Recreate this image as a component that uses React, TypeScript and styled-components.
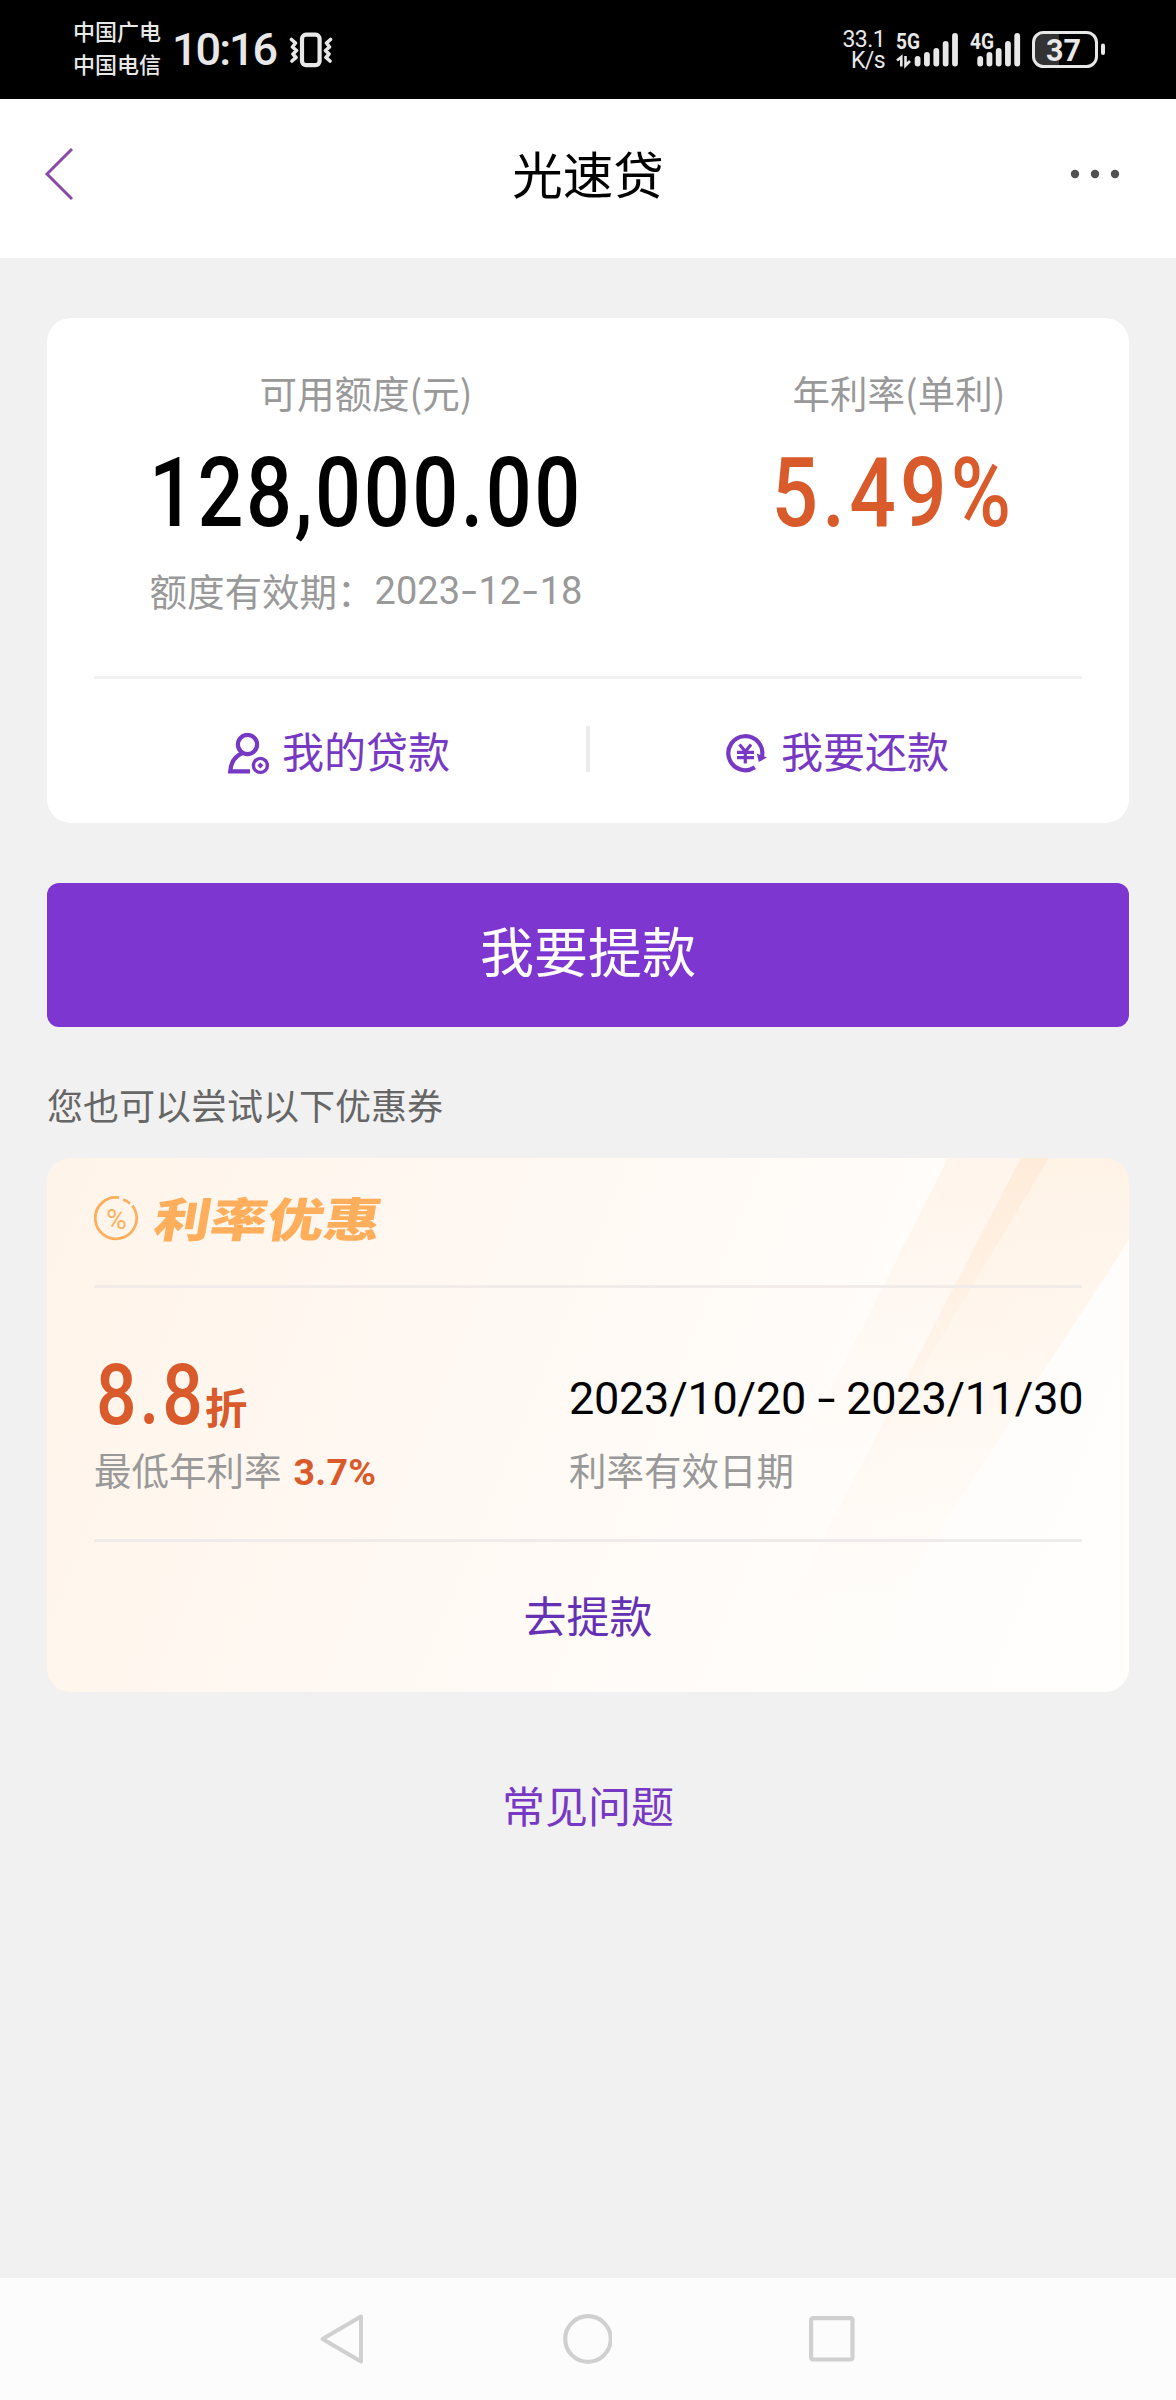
import React from 'react';
import styled, { createGlobalStyle } from 'styled-components';

const cjk = `"Noto Sans CJK SC", sans-serif`;
const latin = `Roboto, "Noto Sans CJK SC", sans-serif`;
const purple = '#7738c4';
const orange = '#d95a2b';

const GlobalStyle = createGlobalStyle`
  * { box-sizing: border-box; }
  body { margin: 0; background: #f1f1f1; }
  button { border: 0; padding: 0; background: none; font-family: inherit; }
`;

const Screen = styled.div`
  display: flex;
  flex-direction: column;
  width: 1176px;
  height: 2400px;
  background: #f1f1f1;
  font-family: ${cjk};
  white-space: nowrap;
`;

/* Status bar */

const StatusBar = styled.div`
  display: flex;
  justify-content: space-between;
  height: 99px;
  padding: 0 70px 0 72px;
  background: #000;
  color: #e8e8e8;
`;

const StatusGroup = styled.div`
  display: flex;
  align-items: flex-start;
`;

const Carriers = styled.div`
  display: flex;
  flex-direction: column;
  width: 100px;
  padding: 14px 0 0 1px;
  font-size: 22px;
  font-weight: 500;
  line-height: 33px;
`;

const Clock = styled.div`
  width: 117px;
  padding-top: 24px;
  font: 500 45px/52px ${latin};
  letter-spacing: -2px;
`;

const Speed = styled.div`
  display: flex;
  flex-direction: column;
  align-items: flex-end;
  width: 44px;
  margin-right: 11px;
  padding-top: 29px;
  font: 400 23px/21px ${latin};
  letter-spacing: -0.6px;
`;

const StatusIcon = styled.svg`
  display: block;
  flex: none;
`;

/* Title bar */

const TitleBar = styled.header`
  display: grid;
  grid-template-columns: 1fr auto 1fr;
  align-items: center;
  height: 159px;
  padding: 0 56px 9px 43px;
  background: #fff;
`;

const Title = styled.h1`
  margin: 0;
  padding-left: 13px;
  font-size: 50.5px;
  font-weight: 400;
  line-height: 72px;
  color: #000;
  transform: translateY(-2px);
`;

const MoreSlot = styled.div`
  display: flex;
  justify-content: flex-end;
`;

/* Content */

const Content = styled.main`
  display: flex;
  flex: 1;
  flex-direction: column;
  padding: 60px 47px 0;
`;

const LimitCard = styled.section`
  height: 505px;
  padding: 0 47px;
  border-radius: 24px;
  background: #fff;
`;

const Figures = styled.div`
  display: grid;
  grid-template-columns: 544px 1fr;
  height: 358px;
  padding-top: 48px;
`;

const Figure = styled.div<{ $shift?: number }>`
  display: flex;
  flex-direction: column;
  align-items: center;
  padding-left: ${(p) => p.$shift ?? 0}px;
`;

const Muted = styled.span`
  font-size: 37.5px;
  line-height: 52px;
  color: #999;
`;

const Amount = styled.span<{ $color: string; $spacing: number; $stretch: number; $offset?: number }>`
  height: 132px;
  margin: 9px 0 5px ${(p) => p.$offset ?? 0}px;
  font: 500 97px/132px ${latin};
  letter-spacing: ${(p) => p.$spacing}px;
  color: ${(p) => p.$color};
  transform: scaleX(${(p) => p.$stretch});
`;

const Validity = styled.div`
  display: flex;
  align-items: center;
  font-size: 37.5px;
  line-height: 52px;
  color: #999;
`;

const Digits = styled.span`
  padding-top: 3px;
  font: 400 38px/49px ${latin};
`;

const Hyphen = styled.span`
  display: inline-block;
  width: 18.5px;
  text-align: center;
  transform: scaleX(1.45);
`;

const Rule = styled.div<{ $color?: string }>`
  height: 3px;
  background: ${(p) => p.$color ?? '#f2f2f2'};
`;

const Actions = styled.div`
  display: grid;
  grid-template-columns: 492px 4px 492px;
  align-items: center;
  height: 144px;
`;

const Action = styled.button<{ $start: number; $gap: number }>`
  display: flex;
  align-items: center;
  gap: ${(p) => p.$gap}px;
  padding: 5px 0 0 ${(p) => p.$start}px;
  font-size: 42px;
  line-height: 60px;
  color: ${purple};
`;

const ActionLabel = styled.span`
  margin-top: -7px;
`;

const Separator = styled.div`
  height: 46px;
  margin-top: -4px;
  background: #ebebeb;
`;

const Primary = styled.button`
  height: 144px;
  margin-top: 60px;
  padding-bottom: 11px;
  border-radius: 12px;
  background: #7e36d0;
  font-size: 54px;
  line-height: 78px;
  color: #fff;
`;

const Hint = styled.p`
  margin: 51px 0 27px;
  font-size: 36px;
  line-height: 53px;
  color: #666;
`;

const Coupon = styled.section`
  position: relative;
  height: 534px;
  padding: 0 47px;
  overflow: hidden;
  border-radius: 24px;
  background: linear-gradient(112deg, #fff4e9 0%, #fff8f2 35%, #fffcf9 68%, #fffefd 100%);
`;

const Rays = styled.svg`
  position: absolute;
  inset: 0;
`;

const CouponBody = styled.div`
  position: relative;
`;

const CouponHead = styled.div`
  display: flex;
  align-items: center;
  gap: 19px;
  height: 127px;
  padding-bottom: 5px;
`;

const CouponTitle = styled.h2`
  margin: 0;
  font-size: 45px;
  font-weight: 900;
  line-height: 60px;
  color: #ffae5c;
  transform-origin: left center;
  transform: translate(-3px, -2px) scale(1.26, 1.04) skewX(-8deg);
`;

const Terms = styled.div`
  display: grid;
  grid-template-columns: 475px 1fr;
  height: 251px;
  padding-top: 64px;
`;

const Term = styled.div`
  display: flex;
  flex-direction: column;
`;

const TermValue = styled.div<{ $lift?: number }>`
  display: flex;
  align-items: baseline;
  height: 91px;
  margin-top: ${(p) => -(p.$lift ?? 0)}px;
  margin-bottom: ${(p) => p.$lift ?? 0}px;
`;

const Discount = styled.span`
  width: 111px;
  font: 500 85px/94px ${latin};
  letter-spacing: 3.5px;
  color: ${orange};
  transform-origin: left center;
  transform: translateX(2px) scaleX(0.84);
`;

const DiscountUnit = styled.span`
  font-size: 42.5px;
  font-weight: 700;
  line-height: 94px;
  color: ${orange};
`;

const Period = styled.span`
  font: 400 45px/94px ${latin};
  letter-spacing: -0.25px;
  color: #000;
`;

const Best = styled.b`
  margin-left: 12px;
  font: 700 37.5px/52px ${latin};
  letter-spacing: 0.3px;
  color: ${orange};
`;

const CouponAction = styled.button`
  display: block;
  width: 100%;
  height: 150px;
  padding-bottom: 7px;
  font-size: 43px;
  line-height: 62px;
  color: #6531b4;
`;

const Faq = styled.a`
  margin-top: 80px;
  align-self: center;
  font-size: 43px;
  line-height: 64px;
  color: ${purple};
`;

const NavBar = styled.nav`
  display: flex;
  align-items: center;
  justify-content: space-between;
  height: 122px;
  padding: 0 321px 0 319px;
  background: #fcfcfc;
`;

const Vibrate = () => (
  <StatusIcon width="44" height="99" viewBox="289 0 44 99" fill="none" stroke="#e8e8e8">
    <rect x="302" y="34.7" width="17.6" height="30.4" rx="4" strokeWidth="4.2" />
    <path d="M291.5 39.5l4 3.5-3 4 4 3.5-3.500 3.500 3 3.500-4 3.500M330.500 39.500l-4 3.500 3 4-4 3.500 3.500 3.500-3 3.500 4 3.500" strokeWidth="3.600" strokeLinecap="round" strokeLinejoin="round" />
  </StatusIcon>
);

const barTops = [56, 52, 48, 41, 33];

const Signal = ({ kind, x, first, step, width, arrows }: { kind: string; x: number; first: number; step: number; width: number; arrows?: boolean }) => (
  <StatusIcon width={width} height="99" viewBox={`${x} 0 ${width} 99`} fill="#e8e8e8">
    <text x={x} y="49" fontFamily="Roboto, sans-serif" fontSize="22.500" fontWeight="700" textLength="24" lengthAdjust="spacingAndGlyphs">{kind}</text>
    {arrows && (
      <path d={`M${x + 1} 60.500l4.300-3.500v9.500M${x + 9.500} 56v9.500l4.500-4.500`} fill="none" stroke="#e8e8e8" strokeWidth="2.600" />
    )}
    {barTops.map((top, i) => (
      <rect key={top} x={first + i * step} y={top} width="5.800" height={66.500 - top} rx="2.900" />
    ))}
  </StatusIcon>
);

const Battery = () => (
  <StatusIcon width="75" height="99" viewBox="1031 0 75 99">
    <path d="M1059 34h-16q-8 0-8 8v15q0 8 8 8h16z" fill="#333" />
    <rect x="1033.500" y="32.500" width="63" height="34" rx="10" fill="none" stroke="#e8e8e8" strokeWidth="3" />
    <rect x="1101" y="43.500" width="4" height="11.500" rx="2" fill="#e8e8e8" />
    <text x="1063.500" y="61" textAnchor="middle" fontFamily="Roboto, sans-serif" fontSize="32" fontWeight="700" textLength="35" lengthAdjust="spacingAndGlyphs" fill="#e8e8e8">37</text>
  </StatusIcon>
);

const PersonIcon = () => (
  <svg width="42" height="42" viewBox="0 0 42 42" fill="none" stroke={purple} strokeWidth="4.200">
    <circle cx="19.500" cy="11.500" r="9.600" />
    <path d="M22 38.400H2.200C2.800 29 8 22.500 15.500 19.800" />
    <circle cx="32.400" cy="32.400" r="7" strokeWidth="3.400" />
    <path d="M32.400 29.400l3 3-3 3-3-3z" fill={purple} stroke="none" />
  </svg>
);

const RepayIcon = () => (
  <svg width="42" height="42" viewBox="0 0 42 42" fill="none" stroke={purple}>
    <path d="M28.800 34.300A17 17 0 1 1 36 23.500" strokeWidth="4.200" />
    <path d="M30.800 20.500L41 24.600 32.800 29z" fill={purple} stroke="none" />
    <path d="M13.500 11.500l5.800 7 5.800-7M11 19.300h17M11 24.700h17M19.300 18V30.500" strokeWidth="3.200" />
  </svg>
);

const RateIcon = () => (
  <svg width="45" height="46" viewBox="0 0 45 46" fill="none" stroke="#ffae5c">
    <path d="M25 1.700A20.700 20.700 0 1 0 40.500 13M29 3.500A20 20 0 0 1 36 7.500M38.500 9.500L40.500 13" strokeWidth="2.800" />
    <text x="22.500" y="32.500" textAnchor="middle" fontFamily="Roboto, sans-serif" fontSize="28" fill="#ffae5c" stroke="none">%</text>
  </svg>
);

export default function App() {
  return (
    <>
      <GlobalStyle />
      <Screen>
        <StatusBar>
          <StatusGroup>
            <Carriers>
              <span>中国广电</span>
              <span>中国电信</span>
            </Carriers>
            <Clock>10:16</Clock>
            <Vibrate />
          </StatusGroup>
          <StatusGroup>
            <Speed>
              <span>33.1</span>
              <span>K/s</span>
            </Speed>
            <Signal kind="5G" x={896} first={914.7} step={9.350} width={74} arrows />
            <Signal kind="4G" x={970} first={977.3} step={9.250} width={61} />
            <Battery />
          </StatusGroup>
        </StatusBar>

        <TitleBar>
          <svg width="34" height="52" viewBox="0 0 34 52" fill="none" stroke="#8a4aa8" strokeWidth="3">
            <path d="M29 1L4 26l25 25" />
          </svg>
          <Title>光速贷</Title>
          <MoreSlot>
            <svg width="50" height="10" viewBox="0 0 50 10" fill="#505050">
              <circle cx="5" cy="5" r="4.200" />
              <circle cx="25" cy="5" r="4.200" />
              <circle cx="45" cy="5" r="4.200" />
            </svg>
          </MoreSlot>
        </TitleBar>

        <Content>
          <LimitCard>
            <Figures>
              <Figure>
                <Muted>可用额度(元)</Muted>
                <Amount $color="#000" $spacing={3} $stretch={0.835}>128,000.00</Amount>
                <Validity>
                  <span>额度有效期：</span>
                  <Digits>2023<Hyphen>-</Hyphen>12<Hyphen>-</Hyphen>18</Digits>
                </Validity>
              </Figure>
              <Figure $shift={78}>
                <Muted>年利率(单利)</Muted>
                <Amount $color={orange} $spacing={5} $stretch={0.845} $offset={-11}>5.49%</Amount>
              </Figure>
            </Figures>
            <Rule />
            <Actions>
              <Action $start={134} $gap={12}>
                <PersonIcon />
                <ActionLabel>我的贷款</ActionLabel>
              </Action>
              <Separator />
              <Action $start={136} $gap={13}>
                <RepayIcon />
                <ActionLabel>我要还款</ActionLabel>
              </Action>
            </Actions>
          </LimitCard>

          <Primary>我要提款</Primary>
          <Hint>您也可以尝试以下优惠券</Hint>

          <Coupon>
            <Rays width="1082" height="534" viewBox="0 0 1082 534">
              <defs>
                <linearGradient id="rayLeft" x1="0" y1="0" x2="0" y2="1">
                  <stop offset="0" stopColor="#ffb070" stopOpacity="0.100" />
                  <stop offset="1" stopColor="#ffb070" stopOpacity="0" />
                </linearGradient>
                <linearGradient id="rayRight" x1="0" y1="0" x2="0" y2="1">
                  <stop offset="0" stopColor="#ffa850" stopOpacity="0.120" />
                  <stop offset="1" stopColor="#ffa850" stopOpacity="0" />
                </linearGradient>
              </defs>
              <path d="M901 0H1002L822 300H749z" fill="url(#rayLeft)" />
              <path d="M974 0H1082V82L842 450H740z" fill="url(#rayRight)" />
            </Rays>
            <CouponBody>
              <CouponHead>
                <RateIcon />
                <CouponTitle>利率优惠</CouponTitle>
              </CouponHead>
              <Rule $color="#f1ebea" />
              <Terms>
                <Term>
                  <TermValue $lift={4}>
                    <Discount>8.8</Discount>
                    <DiscountUnit>折</DiscountUnit>
                  </TermValue>
                  <Muted>最低年利率<Best>3.7%</Best></Muted>
                </Term>
                <Term>
                  <TermValue>
                    <Period>2023/10/20 <Hyphen>-</Hyphen> 2023/11/30</Period>
                  </TermValue>
                  <Muted>利率有效日期</Muted>
                </Term>
              </Terms>
              <Rule $color="#efebea" />
              <CouponAction>去提款</CouponAction>
            </CouponBody>
          </Coupon>

          <Faq>常见问题</Faq>
        </Content>

        <NavBar>
          <svg width="46" height="52" viewBox="0 0 46 52" fill="none" stroke="#d0d0d0" strokeWidth="4" strokeLinejoin="round">
            <path d="M42 3.500V48.500L3.500 26z" />
          </svg>
          <svg width="50" height="50" viewBox="-1 0 50 50" fill="none" stroke="#d0d0d0" strokeWidth="4.200">
            <circle cx="25" cy="25" r="22.800" />
          </svg>
          <svg width="46" height="46" viewBox="0 0 46 46" fill="none" stroke="#d0d0d0" strokeWidth="4.200">
            <rect x="2.100" y="2.100" width="41.400" height="41.400" rx="2" />
          </svg>
        </NavBar>
      </Screen>
    </>
  );
}
